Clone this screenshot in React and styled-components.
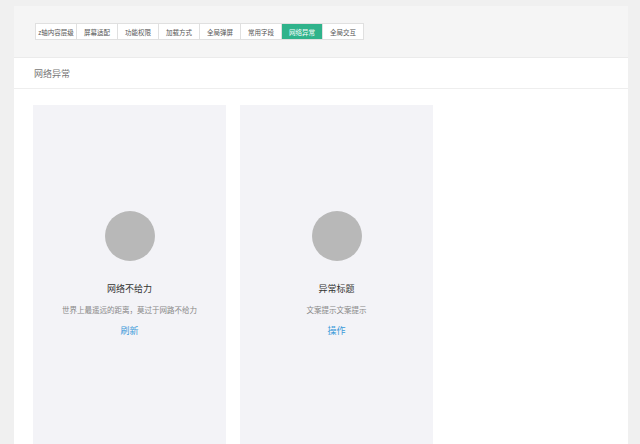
import React from 'react';
import styled, { createGlobalStyle } from 'styled-components';

const GlobalStyle = createGlobalStyle`
  html, body {
    margin: 0;
    padding: 0;
    height: 100%;
    overflow: hidden;
    background: #f0f0f0;
    font-family: "Noto Sans CJK SC", "Noto Sans", sans-serif;
  }
`;

const Page = styled.div`
  padding: 6px 12px 0 14px;
`;

const TopBar = styled.div`
  background: #f5f5f5;
  height: 51px;
  padding-left: 21px;
  display: flex;
  align-items: center;
  border-bottom: 1px solid #ebebeb;
`;

const Tabs = styled.div`
  display: flex;
  border: 1px solid #e0e0e0;
  background: #fff;
`;

const Tab = styled.div`
  width: 40px;
  height: 15px;
  display: flex;
  align-items: center;
  justify-content: center;
  font-size: 6.5px;
  color: ${p => (p.active ? '#fff' : '#555')};
  background: ${p => (p.active ? '#2fb38b' : '#fff')};
  border-left: ${p => (p.first ? 'none' : '1px solid #e0e0e0')};
  white-space: nowrap;
`;

const Panel = styled.div`
  background: #fff;
  height: 400px;
`;

const PanelHeader = styled.div`
  height: 30px;
  padding-left: 20px;
  display: flex;
  align-items: center;
  font-size: 9px;
  color: #777;
  border-bottom: 1px solid #eeeeee;
`;

const PanelBody = styled.div`
  padding: 16px 19px 0;
  display: flex;
  gap: 14px;
`;

const Card = styled.div`
  width: 193px;
  height: 360px;
  background: #f3f3f7;
  display: flex;
  flex-direction: column;
  align-items: center;
  padding-top: 106px;
  box-sizing: border-box;
`;

const Circle = styled.div`
  width: 50px;
  height: 50px;
  border-radius: 50%;
  background: #b8b8b8;
`;

const Title = styled.div`
  margin-top: 22px;
  font-size: 9px;
  color: #333;
  line-height: 12px;
`;

const Desc = styled.div`
  margin-top: 10px;
  font-size: 7.5px;
  color: #888;
  line-height: 10px;
`;

const Action = styled.div`
  margin-top: 10px;
  font-size: 9px;
  color: #3a9ad9;
  line-height: 12px;
`;

const tabs = ['z轴内容层级', '屏幕适配', '功能权限', '加载方式', '全局弹屏', '常用字段', '网络异常', '全局交互'];

const cards = [
  { title: '网络不给力', desc: '世界上最遥远的距离，莫过于网路不给力', action: '刷新' },
  { title: '异常标题', desc: '文案提示文案提示', action: '操作' },
];

export default function App() {
  return (
    <>
      <GlobalStyle />
      <Page>
        <TopBar>
          <Tabs>
            {tabs.map((t, i) => (
              <Tab key={t} first={i === 0} active={t === '网络异常'}>{t}</Tab>
            ))}
          </Tabs>
        </TopBar>
        <Panel>
          <PanelHeader>网络异常</PanelHeader>
          <PanelBody>
            {cards.map(c => (
              <Card key={c.title}>
                <Circle />
                <Title>{c.title}</Title>
                <Desc>{c.desc}</Desc>
                <Action>{c.action}</Action>
              </Card>
            ))}
          </PanelBody>
        </Panel>
      </Page>
    </>
  );
}
